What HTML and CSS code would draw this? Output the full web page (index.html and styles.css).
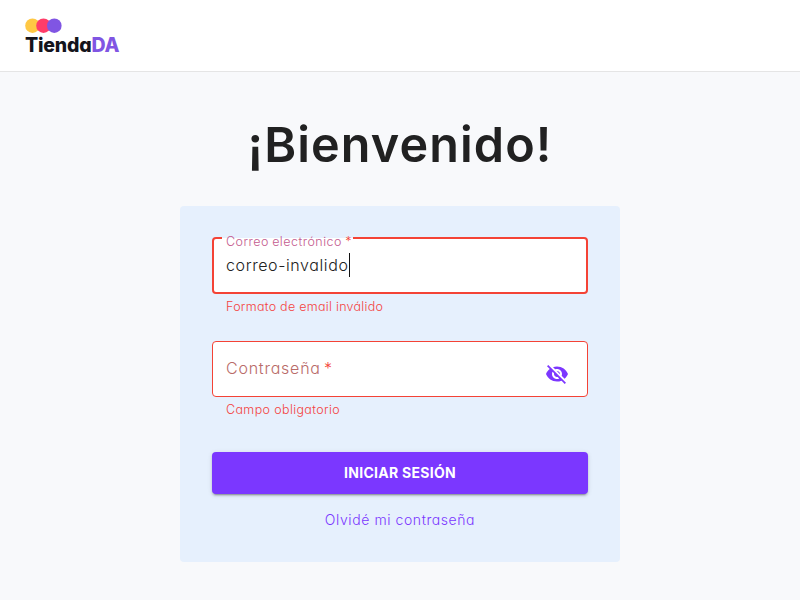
FILE: index.html
```html
<!DOCTYPE html>
<html lang="es">
<head>
<meta charset="utf-8">
<title>TiendaDA</title>
<link rel="stylesheet" href="styles.css">
</head>
<body>
<header class="header">
  <div class="logo">
    <svg class="logo-dots" width="37" height="15" viewBox="0 0 37 15"><circle cx="7.5" cy="7.7" r="7.3" fill="#ffc844"/><circle cx="18.5" cy="7.7" r="7.3" fill="#ff3c69"/><circle cx="29.3" cy="7.7" r="7.3" fill="#8055e3"/></svg>
    <div class="logo-name">Tienda<span class="logo-accent">DA</span></div>
  </div>
</header>
<main class="main">
  <h1 class="title">¡Bienvenido!</h1>
  <form class="card">
    <div class="field field-focused">
      <label class="label">Correo electrónico <span class="star">*</span></label>
      <span class="value">correo-invalido</span><span class="caret"></span>
    </div>
    <p class="help help-email">Formato de email inválido</p>
    <div class="field field-password">
      <span class="placeholder">Contraseña <span class="star">*</span></span>
      <svg class="eye" width="24" height="24" viewBox="0 0 24 24"><path fill="#7c37ff" d="M12 7c2.76 0 5 2.24 5 5 0 .65-.13 1.26-.36 1.83l2.92 2.92c1.51-1.26 2.7-2.89 3.43-4.75-1.73-4.39-6-7.5-11-7.5-1.4 0-2.74.25-3.98.7l2.16 2.16C10.74 7.13 11.35 7 12 7zM2 4.27l2.28 2.28.46.46C3.08 8.3 1.78 10.02 1 12c1.73 4.39 6 7.5 11 7.5 1.55 0 3.03-.3 4.38-.84l.42.42L19.73 22 21 20.73 3.27 3 2 4.27zM7.53 9.8l1.55 1.55c-.05.21-.08.43-.08.65 0 1.66 1.34 3 3 3 .22 0 .44-.03.65-.08l1.55 1.55c-.67.33-1.41.53-2.2.53-2.76 0-5-2.24-5-5 0-.79.2-1.53.53-2.2zm4.31-.78l3.15 3.15.02-.16c0-1.66-1.34-3-3-3l-.17.01z"/></svg>
    </div>
    <p class="help help-password">Campo obligatorio</p>
    <button class="submit" type="button">INICIAR SESIÓN</button>
    <a class="forgot">Olvidé mi contraseña</a>
  </form>
</main>
</body>
</html>
```
FILE: styles.css
```css
* { box-sizing: border-box; }
body {
  margin: 0;
  height: 600px;
  overflow: hidden;
  background: #f8f9fb;
  font-family: Inter, "Open Sans", sans-serif;
  font-feature-settings: "cv11";
  color: #212121;
}
.header {
  height: 72px;
  padding: 18px 25px 0;
  background: #fff;
  border-bottom: 1px solid #e5e5e5;
}
.logo-dots { display: block; }
.logo-name {
  font-size: 19.5px;
  line-height: 24px;
  font-weight: 800;
  letter-spacing: -0.2px;
  color: #14141c;
}
.logo-accent { color: #8055e3; }
.main {
  display: flex;
  flex-direction: column;
  align-items: center;
}
.title {
  margin: 0;
  height: 134px;
  padding-top: 37px;
  font-size: 48.5px;
  line-height: 72px;
  font-weight: 600;
  letter-spacing: 1.1px;
  white-space: nowrap;
}
.card {
  width: 440px;
  height: 356px;
  padding: 31px 32px 0;
  border-radius: 4px;
  background: #e6f0fd;
  display: flex;
  flex-direction: column;
}
.field {
  position: relative;
  display: flex;
  background: #fff;
  border: 1px solid #f44336;
  border-radius: 4px;
  padding: 0 13px;
}
.field-focused {
  height: 57px;
  border-width: 2px;
  padding: 14px 12px 0;
}
.label {
  position: absolute;
  top: -7px;
  left: 8px;
  width: 131px;
  padding-left: 4px;
  font-size: 12.5px;
  line-height: 19px;
  font-weight: 300;
  letter-spacing: 0.48px;
  word-spacing: -0.8px;
  white-space: nowrap;
  color: #c45b8e;
  background: linear-gradient(#e6f0fd 0 6px, #fff 6px);
}
.star { color: #f44336; }
.value {
  font-size: 16px;
  line-height: 24px;
  font-weight: 300;
  letter-spacing: 0.6px;
}
.caret {
  width: 1px;
  height: 24px;
  background: #111;
}
.help {
  margin: 0;
  padding-left: 14px;
  height: 20px;
  font-size: 12.5px;
  line-height: 20px;
  font-weight: 300;
  letter-spacing: 0.28px;
  color: #f4433f;
}
.help-email { margin: 3px 0 24px; }
.field-password {
  height: 56px;
  justify-content: space-between;
  padding-right: 18px;
}
.placeholder {
  padding-top: 14px;
  font-size: 16px;
  line-height: 24px;
  font-weight: 300;
  letter-spacing: 0.77px;
  word-spacing: -2px;
  color: #b96b69;
}
.eye { margin-top: 20px; }
.help-password {
  margin: 3px 0 32px;
  letter-spacing: 0.37px;
}
.submit {
  height: 42px;
  border: 0;
  border-radius: 4px;
  background: #7b37ff;
  color: #fff;
  font-family: inherit;
  font-size: 14px;
  line-height: 24px;
  font-weight: 700;
  letter-spacing: 0.27px;
  padding: 0;
  box-shadow: 0 3px 1px -2px rgba(0,0,0,.2), 0 2px 2px rgba(0,0,0,.14), 0 1px 5px rgba(0,0,0,.12);
}
.forgot {
  align-self: center;
  margin-top: 15px;
  font-size: 14px;
  line-height: 22px;
  font-weight: 300;
  letter-spacing: 0.58px;
  color: #7b37ff;
}
```
